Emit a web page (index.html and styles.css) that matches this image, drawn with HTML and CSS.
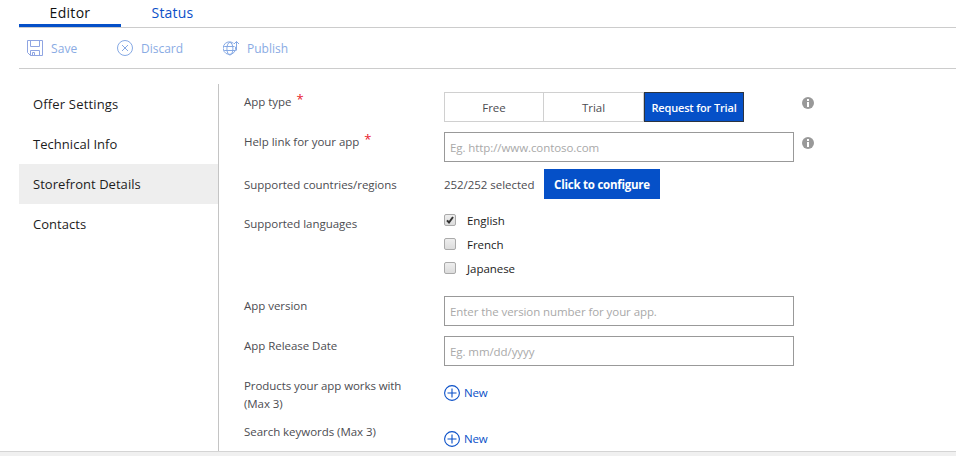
FILE: index.html
```html
<!DOCTYPE html>
<html lang="en">
<head>
<meta charset="utf-8">
<title>Storefront Details</title>
<link rel="stylesheet" href="styles.css">
</head>
<body>
<div class="page">
  <nav class="tabs">
    <a class="tab active">Editor</a>
    <a class="tab status">Status</a>
  </nav>
  <div class="toolbar">
    <a class="tool save"><svg width="16" height="16" viewBox="0 0 16 16"><path d="M.5.5h15v15h-12l-3-3zM3.500.5v6h9v-6M3.500 15.500v-5h9v5M5.500 15.500v-3h2v3"/></svg><span>Save</span></a>
    <a class="tool discard"><svg width="16" height="16" viewBox="0 0 16 16"><circle cx="8" cy="8" r="7.500"/><path d="M5 5l6 6M11 5l-6 6"/></svg><span>Discard</span></a>
    <a class="tool publish"><svg width="16" height="16" viewBox="0 0 16 16"><path d="M10.500 3.300A6.300 6.300 0 1 0 12.600 6.800"/><ellipse cx="6.900" cy="8.700" rx="3" ry="6.300"/><path d="M1.200 6.500h10.300M1.200 10.500h11.400M13.500 10.500v-9M11 4l2.500-2.500L16 4"/></svg><span>Publish</span></a>
  </div>
  <div class="main">
    <ul class="side">
      <li class="offer">Offer Settings</li>
      <li>Technical Info</li>
      <li class="selected">Storefront Details</li>
      <li>Contacts</li>
    </ul>
    <div class="form">
      <div class="label"><span>App type</span><sup>*</sup></div>
      <div class="control">
        <div class="choices"><button>Free</button><button>Trial</button><button class="chosen">Request for Trial</button></div>
        <svg class="info" width="12" height="12" viewBox="0 0 12 12"><circle cx="6" cy="6" r="6"/><path d="M5 2h2v2H5zM5 5h2v5H5z"/></svg>
      </div>
      <div class="label"><span>Help link for your app</span><sup>*</sup></div>
      <div class="control">
        <input type="text" placeholder="Eg. http://www.contoso.com">
        <svg class="info" width="12" height="12" viewBox="0 0 12 12"><circle cx="6" cy="6" r="6"/><path d="M5 2h2v2H5zM5 5h2v5H5z"/></svg>
      </div>
      <div class="label low">Supported countries/regions</div>
      <div class="control"><span class="count">252/252 selected</span><button class="configure">Click to configure</button></div>
      <div class="label low">Supported languages</div>
      <div class="control checks">
        <label><svg class="box" width="12" height="12" viewBox="0 0 10 10"><path d="M2 5.300l2 2.200 4-5.500"/></svg><span>English</span></label>
        <label><svg class="box" width="12" height="12"></svg><span>French</span></label>
        <label><svg class="box" width="12" height="12"></svg><span>Japanese</span></label>
      </div>
      <div class="label">App version</div>
      <div class="control"><input type="text" placeholder="Enter the version number for your app."></div>
      <div class="label">App Release Date</div>
      <div class="control"><input type="text" placeholder="Eg. mm/dd/yyyy"></div>
      <div class="label products">Products your app works with<br>(Max 3)</div>
      <div class="control"><a class="new"><svg width="16" height="16" viewBox="0 0 16 16"><circle cx="8" cy="8" r="7.400"/><path d="M8 3.500v9M3.500 8h9"/></svg>New</a></div>
      <div class="label">Search keywords (Max 3)</div>
      <div class="control"><a class="new"><svg width="16" height="16" viewBox="0 0 16 16"><circle cx="8" cy="8" r="7.400"/><path d="M8 3.500v9M3.500 8h9"/></svg>New</a></div>
    </div>
  </div>
  <div class="bottom"></div>
</div>
</body>
</html>
```
FILE: styles.css
```css
* { box-sizing: border-box; }
body { margin: 0; background: #fff; font: 12px/18px "Open Sans", "Noto Sans", sans-serif; color: #4c4c51; overflow: hidden; }
.page { height: 456px; display: flex; flex-direction: column; }
.tabs { display: flex; height: 28px; margin-left: 19px; border-bottom: 1px solid #ccc; font-size: 14px; line-height: 25px; letter-spacing: .2px; }
.tab { width: 102px; height: 27px; text-align: center; color: #0a50c8; }
.tab.active { color: #111; border-bottom: 3px solid #0550c8; letter-spacing: .3px; }
.tab.status { padding-left: 1px; }
.toolbar { display: flex; height: 41px; margin-left: 19px; border-bottom: 1px solid #ccc; color: #8aabe4; align-items: center; padding-left: 8px; }
.tool { display: flex; align-items: center; gap: 8px; }
.tool span { padding-top: 1px; }
.tool svg { fill: none; stroke: #8fa5e2; stroke-width: 1; }
.tool.publish svg, .tool.discard svg { stroke: #86a9e4; }
.save { width: 90px; letter-spacing: .1px; }
.discard { width: 106px; }
.main { flex: 1; display: flex; min-height: 0; margin-left: 19px; padding-top: 15px; }
.side { list-style: none; width: 200px; margin: 0; padding: 0; border-right: 1px solid #c4c4c4; font-size: 13px; color: #1c1c1c; }
.side li { height: 40px; line-height: 40px; padding-left: 14px; letter-spacing: .04px; }
.side .offer { letter-spacing: .17px; }
.side .selected { background: #eee; }
.form { display: grid; grid-template-columns: 200px 400px; grid-template-rows: 40px 37px 39px 88px 40px 40px 46px 29px; margin: 8px 0 0 25px; font-size: 11.5px; letter-spacing: -.04px; }
.label { padding-top: 1px; white-space: nowrap; }
.label.low { padding-top: 7px; }
.label.products { letter-spacing: -.08px; }
sup { color: #e8202c; font-size: 13px; line-height: 0; vertical-align: 2px; margin-left: 5px; }
.control { display: flex; align-items: flex-start; }
button { font: inherit; color: inherit; padding: 0; letter-spacing: inherit; white-space: nowrap; }
.choices { display: flex; width: 350px; }
.choices button { width: 100px; height: 30px; padding-top: 1px; background: #fff; border: 1px solid #d0d0d0; border-left-width: 0; }
.choices button:first-child { border-left-width: 1px; }
.choices .chosen { background: #0550c8; color: #fff; border: 1px solid #2c3440; font-weight: 600; font-size: 11px; letter-spacing: -.16px; }
.info { margin: 5px 0 0 8px; fill: #999; }
.info path { fill: #fff; }
input { width: 350px; height: 30px; padding: 1px 5px 0; border: 1px solid #999; border-radius: 0; font: inherit; letter-spacing: -.08px; background: #fff; }
input::placeholder { color: #a9a9a9; opacity: 1; }
.count { width: 100px; padding-top: 7px; white-space: nowrap; }
.configure { width: 116px; height: 30px; padding-top: 2px; border: 0; background: #0550c8; color: #fff; font-weight: 700; letter-spacing: -.24px; }
.checks { flex-direction: column; color: #1c1c1c; }
.checks label { display: flex; align-items: center; height: 24px; gap: 11px; }
.checks span { padding-top: 2px; }
.box { background: linear-gradient(#eee, #dcdcdc); border: 1px solid #aaa; border-radius: 2px; fill: none; stroke: #333; stroke-width: 2; }
.new { display: flex; align-items: center; gap: 4px; padding-top: 8px; color: #0a50c8; letter-spacing: -.15px; }
.new svg { fill: none; stroke: #0a50c8; stroke-width: 1.1; }
.bottom { height: 5px; border-top: 1px solid #d4d4d4; background: #f0f0f0; }
```
